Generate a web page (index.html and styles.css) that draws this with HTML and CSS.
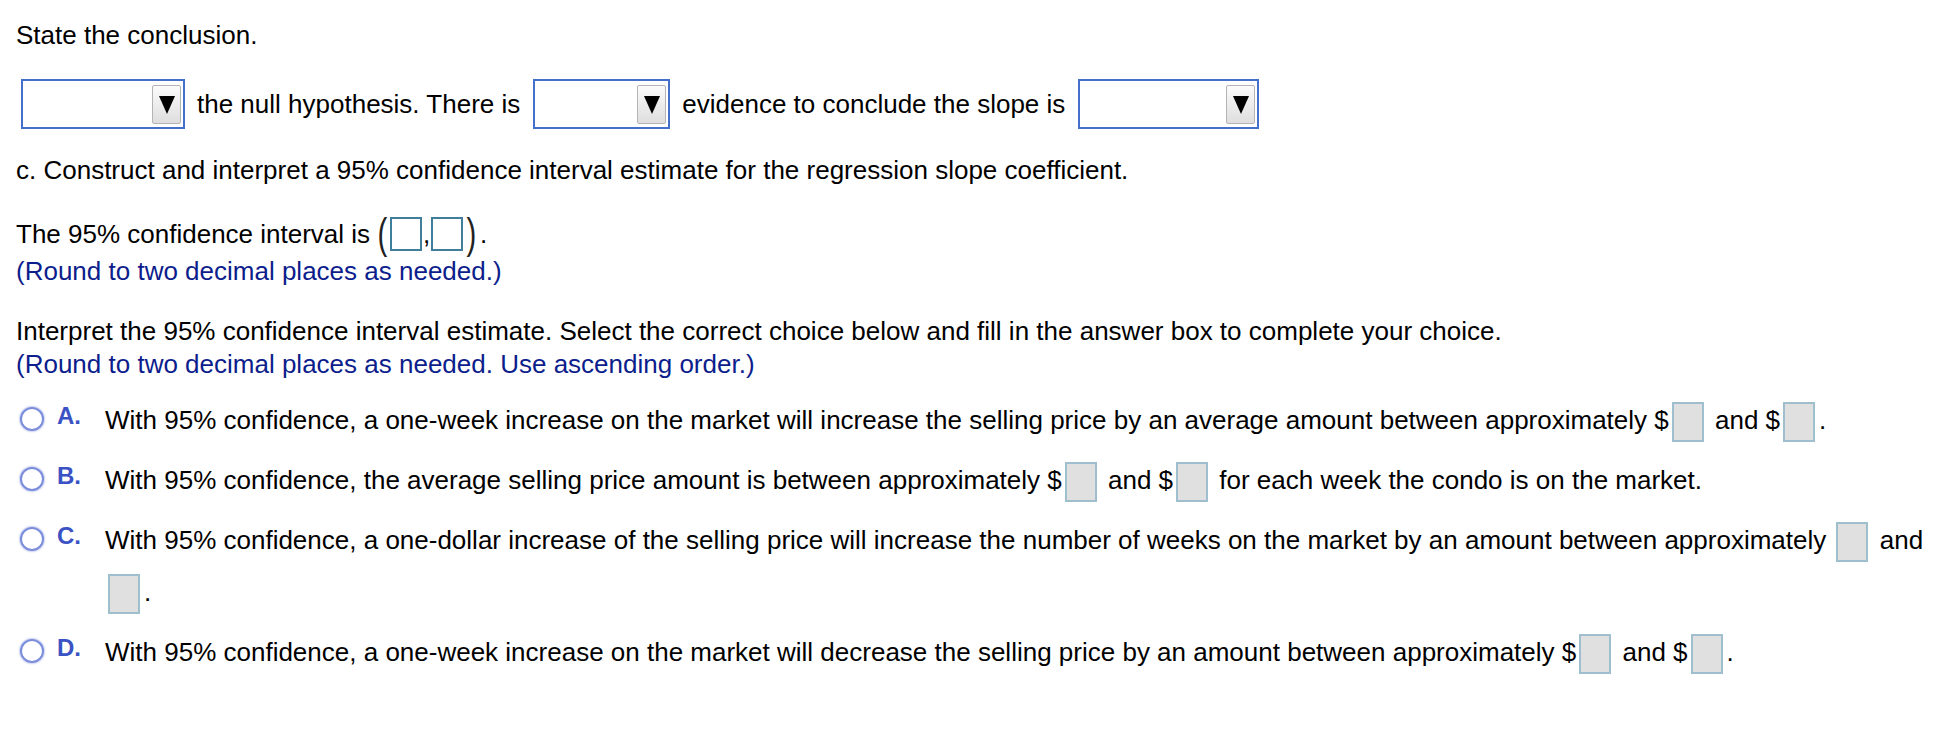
FILE: index.html
```html
<!DOCTYPE html>
<html>
<head>
<meta charset="utf-8">
<link rel="stylesheet" href="styles.css">
</head>
<body>
<div class="page">
  <p class="line q-title">State the conclusion.</p>

  <div class="select-row">
    <span class="dd dd-1"><span class="dd-btn"><span class="tri"></span></span></span>
    <span class="txt">the null hypothesis. There is</span>
    <span class="dd dd-2"><span class="dd-btn"><span class="tri"></span></span></span>
    <span class="txt">evidence to conclude the slope is</span>
    <span class="dd dd-3"><span class="dd-btn"><span class="tri"></span></span></span>
  </div>

  <p class="line part-c">c. Construct and interpret a 95% confidence interval estimate for the regression slope coefficient.</p>

  <div class="ci-row">
    <span class="txt">The 95% confidence interval is</span>
    <span class="paren paren-open">(</span><span class="ci-box"></span><span class="comma">,</span><span class="ci-box"></span><span class="paren paren-close">)</span><span class="dot">.</span>
  </div>
  <p class="line hint">(Round to two decimal places as needed.)</p>

  <p class="line interp">Interpret the 95% confidence interval estimate. Select the correct choice below and fill in the answer box to complete your choice.</p>
  <p class="line hint">(Round to two decimal places as needed. Use ascending order.)</p>

  <div class="options">
    <div class="opt">
      <span class="radio"></span>
      <span class="letter">A.</span>
      <div class="opt-text">With 95% confidence, a one-week increase on the market will increase the selling price by an average amount between approximately $<span class="ans"></span> and $<span class="ans"></span>.</div>
    </div>
    <div class="opt">
      <span class="radio"></span>
      <span class="letter">B.</span>
      <div class="opt-text">With 95% confidence, the average selling price amount is between approximately $<span class="ans"></span> and $<span class="ans"></span> for each week the condo is on the market.</div>
    </div>
    <div class="opt">
      <span class="radio"></span>
      <span class="letter">C.</span>
      <div class="opt-text">With 95% confidence, a one-dollar increase of the selling price will increase the number of weeks on the market by an amount between approximately <span class="ans"></span> and <span class="ans"></span>.</div>
    </div>
    <div class="opt">
      <span class="radio"></span>
      <span class="letter">D.</span>
      <div class="opt-text">With 95% confidence, a one-week increase on the market will decrease the selling price by an amount between approximately $<span class="ans"></span> and $<span class="ans"></span>.</div>
    </div>
  </div>
</div>
</body>
</html>
```

FILE: styles.css
```css
html, body {
  margin: 0;
  padding: 0;
  background: #ffffff;
}

body {
  font-family: "Liberation Sans", Arial, Helvetica, sans-serif;
  font-size: 26px;
  color: #000000;
}

.page {
  padding: 20px 8px 0 16px;
}

.line {
  margin: 0;
  line-height: 30px;
}

.q-title {
  margin-bottom: 29px;
}

/* dropdowns */
.select-row {
  display: flex;
  align-items: center;
  height: 50px;
  margin-left: 5px;
}

.select-row .txt {
  margin: 0 13px 0 12px;
  line-height: 30px;
}

.dd {
  box-sizing: border-box;
  height: 50px;
  border: 2px solid #4470cc;
  background: #ffffff;
  display: flex;
  align-items: center;
  justify-content: flex-end;
  padding-right: 2px;
}

.dd-1 { width: 164px; }
.dd-2 { width: 137px; }
.dd-3 { width: 181px; }

.dd-btn {
  box-sizing: border-box;
  width: 29px;
  height: 39px;
  border: 1px solid #b4b4b4;
  border-radius: 2px;
  background: linear-gradient(#fbfbfb, #dedede);
  display: flex;
  align-items: center;
  justify-content: center;
}

.tri {
  width: 0;
  height: 0;
  border-left: 8px solid transparent;
  border-right: 8px solid transparent;
  border-top: 18px solid #000;
  margin-top: 1px;
}

.part-c {
  margin-top: 26px;
}

/* confidence interval */
.ci-row {
  display: flex;
  align-items: center;
  height: 40px;
  margin-top: 29px;
}

.ci-row .txt {
  margin-right: 6px;
}

.paren {
  font-size: 42px;
  font-weight: 300;
  line-height: 40px;
  transform: scaleX(0.7);
  width: 10px;
  text-align: center;
  color: #222;
}

.paren-open {
  margin-right: 4px;
}

.paren-close {
  margin-left: 2px;
}

.ci-box {
  box-sizing: border-box;
  flex: none;
  width: 32px;
  height: 34px;
  border: 2px solid #3f7f9c;
  background: #fff;
}

.comma {
  width: 9px;
  text-align: center;
}

.dot {
  margin-left: 5px;
}

.hint {
  color: #0c1d8c;
}

.ci-row + .hint {
  margin-top: 2px;
}

.interp {
  margin-top: 30px;
}

.interp + .hint {
  margin-top: 3px;
}

/* options */
.options {
  margin-top: 15px;
  display: flex;
  flex-direction: column;
  gap: 8px;
}

.opt {
  display: flex;
  align-items: flex-start;
}

.radio {
  box-sizing: border-box;
  flex: none;
  width: 24px;
  height: 24px;
  margin: 13px 0 0 4px;
  border-radius: 50%;
  border: 2.5px solid #7b8ddb;
  box-shadow: 0 0 1.5px 1px rgba(123, 141, 219, 0.4);
  background: #fff;
}

.letter {
  flex: none;
  width: 48px;
  margin-left: 13px;
  font-size: 24px;
  font-weight: bold;
  color: #3a52c4;
  line-height: 24px;
  margin-top: 10px;
}

.opt-text {
  flex: 1;
  line-height: 52px;
}

.ans {
  display: inline-block;
  box-sizing: border-box;
  width: 32px;
  height: 40px;
  margin: 0 4px 0 3px;
  vertical-align: middle;
  background: #e0e0e0;
  border: 2px solid #9fbfce;
}
```
